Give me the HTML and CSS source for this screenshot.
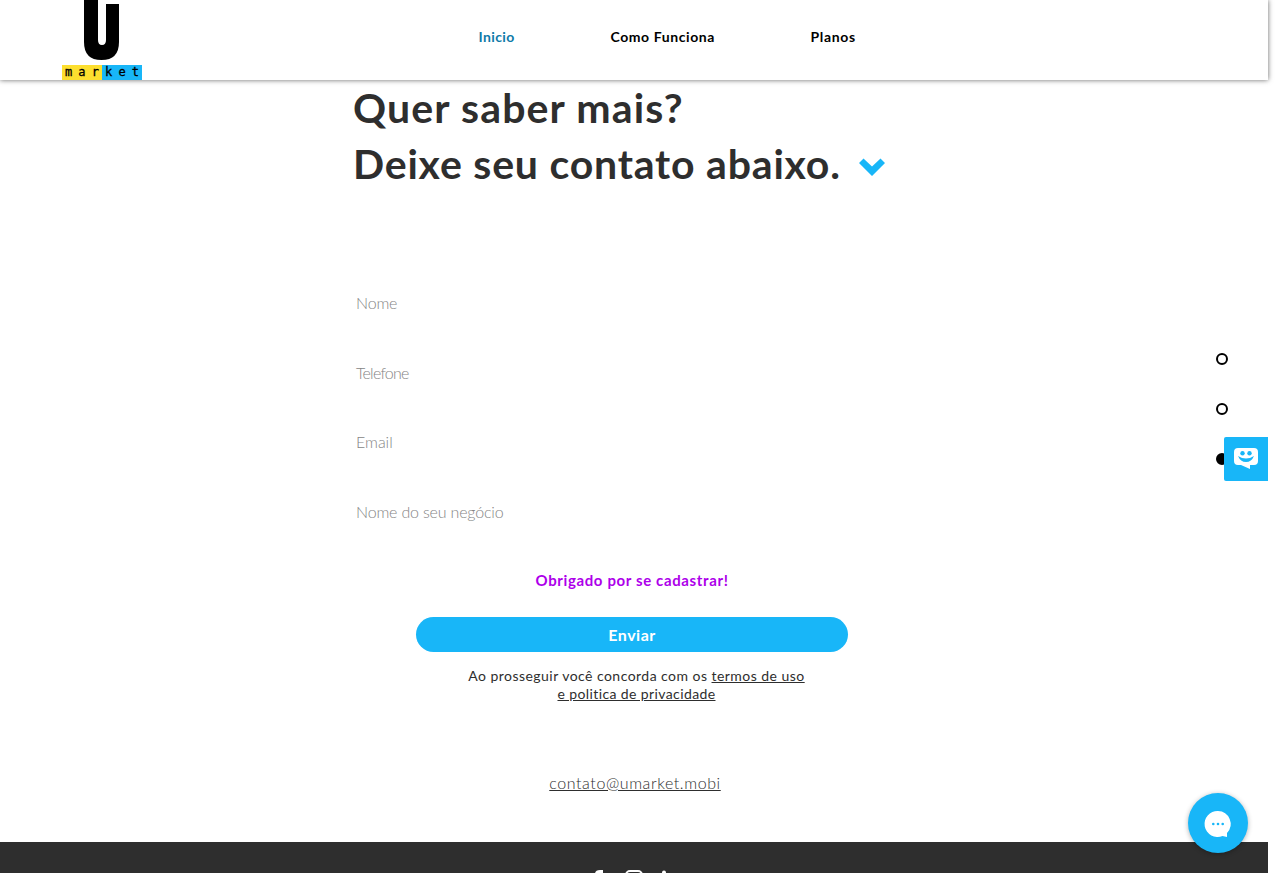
FILE: index.html
```
<!DOCTYPE html>
<html lang="pt-BR">
<head>
<meta charset="utf-8">
<title>Umarket</title>
<link rel="stylesheet" href="styles.css">
</head>
<body>
<div class="page">
  <header class="header">
    <a class="logo" href="#">
      <svg class="logo-mark" width="80" height="65" viewBox="0 0 80 65"><path d="M22 0H36V40Q36 45 40 45Q44 45 44 40V4H57V42Q57 60 39.500 60Q22 60 22 42Z"/></svg>
      <span class="logo-word"><span>m</span><span>a</span><span>r</span><span>k</span><span>e</span><span>t</span></span>
    </a>
    <nav class="nav">
      <a class="nav-link nav-inicio" href="#">Inicio</a>
      <a class="nav-link nav-como" href="#">Como Funciona</a>
      <a class="nav-link nav-planos" href="#">Planos</a>
    </nav>
  </header>
  <main class="main">
    <h1 class="title"><span class="title-a">Quer saber mais?</span><br><span class="title-b">Deixe seu contato abaixo.</span><svg class="chevron" width="28" height="20" viewBox="0 0 28 20"><path d="M1 6L5.500 1.500L14 9.500L22.500 1.500L27 6L14 19Z"/></svg></h1>
    <form class="form">
      <label class="field f-nome">Nome</label>
      <label class="field f-tel">Telefone</label>
      <label class="field f-email">Email</label>
      <label class="field f-neg">Nome do seu negócio</label>
      <p class="thanks">Obrigado por se cadastrar!</p>
      <button class="send" type="button">Enviar</button>
    </form>
    <p class="terms"><span class="terms-a">Ao prosseguir você concorda com os <a href="#">termos de uso</a></span><br><a class="terms-b" href="#">e politica de privacidade</a></p>
    <p class="contact"><a href="#">contato@umarket.mobi</a></p>
  </main>
  <footer class="footer">
    <svg width="90" height="24" viewBox="0 0 90 24" fill="none" stroke="#fff"><path fill="#fff" stroke="none" d="M4 20V4Q4 0 9 0H12V3H9.500Q8 3 8 5V20Z"/><rect x="35" y="1" width="16" height="16" rx="4" stroke-width="2"/><circle cx="73" cy="2.500" r="2" fill="#fff" stroke="none"/></svg>
  </footer>
  <div class="dots"><i class="dot"></i><i class="dot"></i><i class="dot dot-on"></i></div>
  <a class="feedback" href="#"><svg width="44" height="44" viewBox="0 0 44 44"><path fill="#fff" d="M14 11H30Q34 11 34 15V24Q34 28 30 28H26V32L17 28H14Q10 28 10 24V15Q10 11 14 11Z"/><circle cx="18.500" cy="16.300" r="2.200"/><circle cx="25.500" cy="16.300" r="2.200"/><path d="M14 19Q22 24 30 19Q27.500 25 22 25Q16.500 25 14 19Z"/></svg></a>
  <a class="chat" href="#"><svg width="60" height="60" viewBox="0 0 60 60"><path fill="#fff" d="M30 18A13 13 0 1 0 34.500 43L39 44V40A13 13 0 0 0 30 18Z"/><circle cx="25.300" cy="31" r="1.300"/><circle cx="30" cy="31" r="1.300"/><circle cx="34.700" cy="31" r="1.300"/></svg></a>
</div>
</body>
</html>
```
FILE: styles.css
```
* { box-sizing: border-box; }
body { margin: 0; background: #fff; font-family: Lato, "Open Sans", sans-serif; overflow: hidden; }
p, h1 { margin: 0; }
a { color: inherit; }
.page { position: relative; width: 1268px; height: 873px; }
.header { position: relative; display: flex; height: 80px; background: #fff; box-shadow: 0 0 5px rgba(0,0,0,.6); }
.logo { display: flex; flex-direction: column; width: 80px; margin-left: 62px; color: #000; text-decoration: none; }
.logo-word { display: flex; justify-content: space-between; height: 15px; padding: 0 3px; font: 12px/14px "DejaVu Sans Mono", monospace; -webkit-text-stroke: .3px #000; background: linear-gradient(90deg, #fddf2f 50%, #18b6f8 50%); }
.nav { display: flex; gap: 96px; margin-left: 336.500px; padding-top: 27px; font-size: 14px; line-height: 20px; font-weight: 700; }
.nav-link { color: #000; text-decoration: none; white-space: nowrap; }
.nav-inicio { color: #0e7aa8; width: 36px; letter-spacing: .4px; }
.nav-como { width: 104px; letter-spacing: .58px; }
.nav-planos { letter-spacing: .65px; }
.main { height: 762px; }
.title { padding-left: 353px; font-size: 41px; line-height: 56px; font-weight: 700; color: #2e2e2e; height: 193px; white-space: nowrap; }
.title-a { letter-spacing: 1.150px; }
.title-b { letter-spacing: .8px; }
.chevron { margin-left: 17px; fill: #18b6f8; transform: translateY(-2px); }
.form { display: flex; flex-direction: column; padding-left: 356px; }
.field { height: 69.670px; padding-top: 20px; font-size: 16px; line-height: 20px; color: #858585; font-weight: 300; }
.f-nome, .f-neg { letter-spacing: -.18px; }
.f-tel { letter-spacing: -.75px; }
.thanks { width: 552px; text-align: center; font-size: 15px; line-height: 20px; font-weight: 700; color: #ad00ea; padding-top: 18px; letter-spacing: .63px; }
.send { width: 432px; height: 35px; margin: 27px 0 0 60px; padding: 2px 0 0; border: 0; border-radius: 18px; background: #18b6f8; color: #fff; font: 700 16px/20px Lato, sans-serif; letter-spacing: .5px; }
.terms { width: 1273px; text-align: center; font-size: 14px; line-height: 18px; color: #2e2e2e; margin-top: 15px; }
.terms-a { letter-spacing: .46px; }
.terms-b { letter-spacing: .39px; }
.contact { width: 1270px; text-align: center; font-size: 16px; line-height: 20px; font-weight: 300; color: #2e2e2e; margin-top: 70px; letter-spacing: .59px; }
.footer { height: 31px; background: #2e2e2e; overflow: hidden; padding: 28px 0 0 591px; }
.footer svg { display: block; }
.dots { position: absolute; left: 1216px; top: 353px; display: flex; flex-direction: column; gap: 38px; }
.dot { width: 12px; height: 12px; border: 2px solid #000; border-radius: 50%; }
.dot-on { background: #000; }
.feedback { position: absolute; left: 1224px; top: 437px; width: 44px; height: 44px; background: #18b6f8; border-radius: 2px 0 0 2px; fill: #18b6f8; }
.chat { position: absolute; left: 1188px; top: 793px; width: 60px; height: 60px; border-radius: 50%; background: #18b6f8; fill: #18b6f8; box-shadow: 0 1px 5px rgba(0,0,0,.3); }
```
